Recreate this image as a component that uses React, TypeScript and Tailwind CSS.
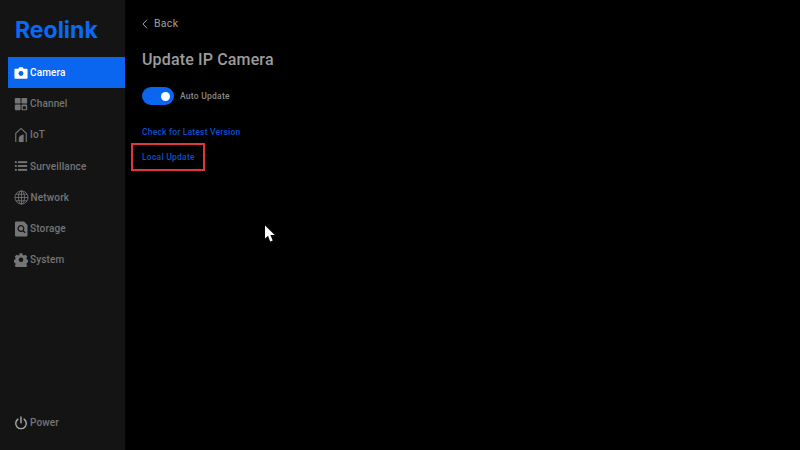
import React from 'react';

const Icon: React.FC<{ children: React.ReactNode }> = ({ children }) => (
  <svg width="14" height="14" viewBox="0 0 16 16" className="shrink-0" fill="currentColor">
    {children}
  </svg>
);

const CameraIcon = () => (
  <svg width="14" height="14" viewBox="0 0 16 16" className="shrink-0">
    <path d="M1.500 3h3.500l1-1.500h4l1 1.500h3.500a1 1 0 0 1 1 1v9.500a1 1 0 0 1-1 1h-13a1 1 0 0 1-1-1v-9.500a1 1 0 0 1 1-1z" fill="#ffffff" />
    <circle cx="8" cy="8.500" r="2.800" fill="#0a66ee" />
  </svg>
);

const ChannelIcon = () => (
  <Icon>
    <rect x="1" y="1" width="6.500" height="6.500" rx="1" />
    <rect x="8.500" y="1" width="6.500" height="6.500" rx="1" />
    <rect x="1" y="8.500" width="6.500" height="6.500" rx="1" />
    <path fillRule="evenodd" d="M9.500 8.500h4.500a1 1 0 0 1 1 1v4.500a1 1 0 0 1-1 1h-4.500a1 1 0 0 1-1-1v-4.500a1 1 0 0 1 1-1zm.5 2v3.500h3.500v-3.500z" />
  </Icon>
);

const IotIcon = () => (
  <svg width="14" height="16" viewBox="0 0 16 18" className="shrink-0" fill="none">
    <path d="M2 17V7L8 1.500 14 7v10" stroke="currentColor" strokeWidth="1.300" />
    <path d="M5.500 17v-4C5.500 10.500 8 9 11 8.500V17z" fill="currentColor" />
  </svg>
);

const SurveillanceIcon = () => (
  <Icon>
    <rect x="1" y="2.500" width="2.200" height="2.200" />
    <rect x="4.500" y="2.500" width="10.500" height="2.200" />
    <rect x="1" y="6.900" width="2.200" height="2.200" />
    <rect x="4.500" y="6.900" width="10.500" height="2.200" />
    <rect x="1" y="11.300" width="2.200" height="2.200" />
    <rect x="4.500" y="11.300" width="10.500" height="2.200" />
  </Icon>
);

const NetworkIcon = () => (
  <svg width="15" height="15" viewBox="0 0 16 16" className="shrink-0 -ml-[0.5px]" fill="none" stroke="currentColor" strokeWidth="0.900">
    <circle cx="8" cy="8" r="7" />
    <ellipse cx="8" cy="8" rx="3.200" ry="7" />
    <path d="M8 1v14M1 8h14M2 4.500h12M2 11.500h12" />
  </svg>
);

const StorageIcon = () => (
  <svg width="14" height="16" viewBox="0 0 14 16" className="shrink-0" fill="currentColor">
    <path fillRule="evenodd" d="M2 0.500h8l3.500 3.500v10.500a1 1 0 0 1-1 1h-10.500a1 1 0 0 1-1-1v-13a1 1 0 0 1 1-1zm5 3.500a3.500 3.500 0 1 0 1.900 6.440l1.800 1.800.9-.9-1.800-1.800A3.500 3.500 0 0 0 7 4zm0 1.300a2.200 2.200 0 1 1 0 4.400 2.200 2.200 0 0 1 0-4.400z" />
  </svg>
);

const SystemIcon = () => (
  <Icon>
    <path fillRule="evenodd" d="M6.500 0.500h3l.4 2 1.500.7 1.800-1 2 2.300-1.100 1.700.5 1.600 1.900.6v3l-1.900.6-.5 1.600 1.100 1.700-2 2.300-1.800-1-1.500.7-.4 1.900h-3l-.4-1.900-1.500-.7-1.800 1-2-2.300 1.100-1.700-.5-1.600-1.900-.6v-3l1.900-.6.5-1.600-1.100-1.700 2-2.300 1.800 1 1.500-.7zM8 5.500a2.600 2.600 0 1 0 0 5.200 2.600 2.600 0 0 0 0-5.200z" transform="translate(0 -0.100) scale(1 0.96)" />
  </Icon>
);

const PowerIcon = () => (
  <svg width="14" height="14" viewBox="0 0 16 16" className="shrink-0" fill="none" stroke="#a8a8a8" strokeWidth="1.600" strokeLinecap="round">
    <path d="M8 1.200v6.600" />
    <path d="M4.500 3.600a6 6 0 1 0 7 0" />
  </svg>
);

const navItems = [
  { label: 'Camera', icon: <CameraIcon />, active: true },
  { label: 'Channel', icon: <ChannelIcon /> },
  { label: 'IoT', icon: <IotIcon /> },
  { label: 'Surveillance', icon: <SurveillanceIcon /> },
  { label: 'Network', icon: <NetworkIcon /> },
  { label: 'Storage', icon: <StorageIcon /> },
  { label: 'System', icon: <SystemIcon /> },
];

export default function App() {
  return (
    <div className="relative flex h-[450px] w-[800px] overflow-hidden bg-black font-['Roboto',sans-serif]">
      {/* Sidebar */}
      <aside className="flex h-full w-[125px] shrink-0 flex-col bg-[#141414] pb-[20px] pl-[8px]">
        <div className="h-[57px] pl-[7px] pt-[12px] font-['Inter',sans-serif] text-[23px] leading-[36px] font-bold text-[#0a6af5]">
          Reolink
        </div>
        <nav className="flex flex-col">
          {navItems.map((item) => (
            <div
              key={item.label}
              className={
                item.active
                  ? 'flex h-[31.200px] items-center gap-[2px] bg-[#0a66ee] pl-[6px] text-[10px] tracking-[0.15px] text-white font-medium'
                  : 'flex h-[31.200px] items-center gap-[2px] pl-[6px] text-[10px] tracking-[0.15px] text-[#757575] font-medium'
              }
            >
              {item.icon}
              <span>{item.label}</span>
            </div>
          ))}
        </nav>
        <div className="mt-auto flex items-center gap-[2px] pl-[6px] text-[10px] tracking-[0.15px] text-[#757575] font-medium">
          <PowerIcon />
          <span>Power</span>
        </div>
      </aside>

      {/* Content */}
      <main className="flex flex-1 flex-col pl-[6px] pt-[16px]">
        <div className="flex h-[15px] items-center gap-[5px] pl-[11px] text-[10.500px] tracking-[0.3px] text-[#a0a0a0]">
          <svg width="6" height="10" viewBox="0 0 6 10" fill="none" stroke="#a0a0a0" strokeWidth="1">
            <path d="M5 0.800 1 5l4 4.200" />
          </svg>
          <span className="ml-[1px]">Back</span>
        </div>
        <h1 className="mt-[17px] pl-[11px] text-[16px] leading-[24px] font-medium tracking-[0.15px] text-[#9c9c9c]">
          Update IP Camera
        </h1>
        <div className="mt-[15px] flex items-center gap-[6px] pl-[11px]">
          <div className="flex h-[18px] w-[32px] items-center justify-end rounded-full bg-[#0a66ee] pr-[4px]">
            <div className="h-[9px] w-[9px] rounded-full bg-white" />
          </div>
          <span className="text-[8.500px] font-medium tracking-[0.25px] text-[#8a8a8a]">Auto Update</span>
        </div>
        <div className="mt-[21px] pl-[11px] text-[8.500px] leading-[12px] font-medium tracking-[0.2px] text-[#0b50cc]">
          Check for Latest Version
        </div>
        <div className="mt-[5px] flex h-[28px] w-[74px] items-center border-2 border-[#e0353a] pl-[9px] text-[8.500px] font-medium tracking-[0.25px] text-[#0b50cc]">
          Local Update
        </div>
      </main>

      {/* Mouse pointer */}
      <svg width="12" height="18" viewBox="0 0 12 18" className="absolute left-[264px] top-[225px]" fill="#ffffff">
        <path d="M1 0.500v13l3-2.800 2.200 5.800 2.500-1-2.300-5.500h4.300z" />
      </svg>
    </div>
  );
}
